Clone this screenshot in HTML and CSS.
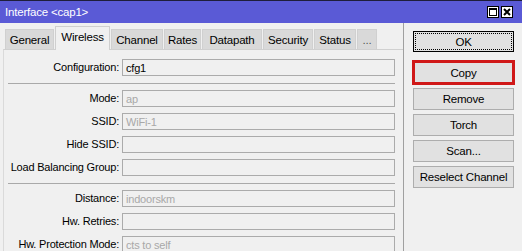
FILE: index.html
```html
<!DOCTYPE html>
<html>
<head>
<meta charset="utf-8">
<link rel="stylesheet" href="styles.css">
</head>
<body>
<div class="win">
  <div class="titlebar">
    <span class="title">Interface &lt;cap1&gt;</span>
    <div class="ctrls">
      <span class="cbtn"><svg width="10" height="10" viewBox="0 0 10 10"><rect x="1.5" y="1.5" width="7" height="7" fill="none" stroke="#000" stroke-width="1"/><rect x="1" y="1" width="8" height="2" fill="#000"/></svg></span>
      <span class="cbtn"><svg width="10" height="10" viewBox="0 0 10 10"><path d="M2 2 L8 8 M8 2 L2 8" stroke="#000" stroke-width="2"/></svg></span>
    </div>
  </div>
  <div class="body">
    <div class="main">
      <div class="tabs">
        <div class="tab t-general">General</div>
        <div class="tab active t-wireless">Wireless</div>
        <div class="tab t-channel">Channel</div>
        <div class="tab t-rates">Rates</div>
        <div class="tab t-datapath">Datapath</div>
        <div class="tab t-security">Security</div>
        <div class="tab t-status">Status</div>
        <div class="tab t-more">...</div>
      </div>
      <div class="panel">
        <div class="row"><label>Configuration:</label><div class="field">cfg1</div></div>
        <div class="sep"></div>
        <div class="row"><label>Mode:</label><div class="field dis">ap</div></div>
        <div class="row"><label>SSID:</label><div class="field dis">WiFi-1</div></div>
        <div class="row"><label>Hide SSID:</label><div class="field"></div></div>
        <div class="row"><label>Load Balancing Group:</label><div class="field"></div></div>
        <div class="sep"></div>
        <div class="row"><label>Distance:</label><div class="field dis">indoorskm</div></div>
        <div class="row"><label>Hw. Retries:</label><div class="field"></div></div>
        <div class="row"><label>Hw. Protection Mode:</label><div class="field dis">cts to self</div></div>
      </div>
    </div>
    <div class="side">
      <div class="btn ok"><span class="focus">OK</span></div>
      <div class="btn copy">Copy</div>
      <div class="btn">Remove</div>
      <div class="btn">Torch</div>
      <div class="btn">Scan...</div>
      <div class="btn">Reselect Channel</div>
    </div>
  </div>
</div>
</body>
</html>
```
FILE: styles.css
```css
* { box-sizing: border-box; }
html, body {
  margin: 0;
  padding: 0;
  background: #f0f0f0;
}
body {
  width: 522px;
  height: 251px;
  overflow: hidden;
  font-family: "Liberation Sans", Arial, sans-serif;
  font-size: 11px;
  letter-spacing: -0.2px;
  color: #000;
}
.win {
  width: 522px;
  height: 251px;
  display: flex;
  flex-direction: column;
}
.titlebar {
  height: 23px;
  border-top: 1px solid #1e1e3c;
  background: #5a5ad6;
  display: flex;
  align-items: center;
  justify-content: space-between;
  padding: 0 9px 0 5px;
  flex: none;
}
.title {
  color: #fff;
  font-size: 11.5px;
}
.ctrls {
  display: flex;
  gap: 2px;
}
.cbtn {
  width: 12px;
  height: 12px;
  background: #fff;
  border: 1px solid #000;
  display: flex;
  align-items: center;
  justify-content: center;
}
.cbtn svg { display: block; }
.body {
  flex: 1;
  display: flex;
}
.main {
  width: 404px;
  display: flex;
  flex-direction: column;
  border-right: 1px solid #a0a0a0;
}
.tabs {
  height: 26px;
  display: flex;
  align-items: flex-end;
  padding-left: 5px;
  gap: 1px;
  flex: none;
}
.tab {
  height: 20px;
  background: #d9d9d9;
  border: 1px solid #d0d0d0;
  border-bottom: none;
  display: flex;
  align-items: center;
  justify-content: center;
  white-space: nowrap;
  font-size: 11.5px;
}
.tab.active {
  height: 24px;
  margin-bottom: -1px;
  background: #f0f0f0;
  border-color: #cfcfcf;
  position: relative;
  z-index: 1;
  padding-bottom: 4px;
}
.t-general { width: 49px; }
.t-wireless { width: 55px; }
.t-channel { width: 52px; }
.t-rates { width: 37px; }
.t-datapath { width: 60px; }
.t-security { width: 50px; }
.t-status { width: 42px; }
.t-more { width: 20px; color: #555; }
.panel {
  flex: 1;
  margin-left: 3px;
  border-left: 1px solid #dadada;
  border-top: 1px solid #d0d0d0;
  padding-top: 6px;
  display: flex;
  flex-direction: column;
}
.row {
  height: 23px;
  display: flex;
  align-items: flex-start;
  padding-top: 3px;
  flex: none;
}
.row label {
  width: 115px;
  text-align: right;
  padding-top: 2px;
  margin-right: 3px;
  white-space: nowrap;
}
.field {
  width: 273px;
  height: 17px;
  border: 1px solid #ababab;
  background: #f0f0f0;
  padding: 1px 3px 0;
  line-height: 14px;
}
.field.dis { color: #a8a8a8; }
.sep {
  height: 8px;
  flex: none;
  margin-left: 4px;
  width: 387px;
  position: relative;
}
.sep::after {
  content: "";
  position: absolute;
  left: 0;
  right: 0;
  top: 4px;
  height: 1px;
  background: #a9a9a9;
}
.side {
  padding: 8px 0 0 9px;
  display: flex;
  flex-direction: column;
  gap: 4px;
}
.btn {
  width: 101px;
  height: 22px;
  background: #e1e1e1;
  border: 1px solid #adadad;
  display: flex;
  align-items: center;
  justify-content: center;
  white-space: nowrap;
  font-size: 11.5px;
}
.btn.ok {
  height: 21px;
  border: 1px solid #000;
  padding: 1px;
  margin-bottom: 5px;
}
.btn.ok .focus {
  width: 100%;
  height: 100%;
  border: 1px dotted #000;
  display: flex;
  align-items: center;
  justify-content: center;
}
.btn.copy {
  height: 23px;
  outline: 3px solid #d01818;
  outline-offset: -2px;
}
```
